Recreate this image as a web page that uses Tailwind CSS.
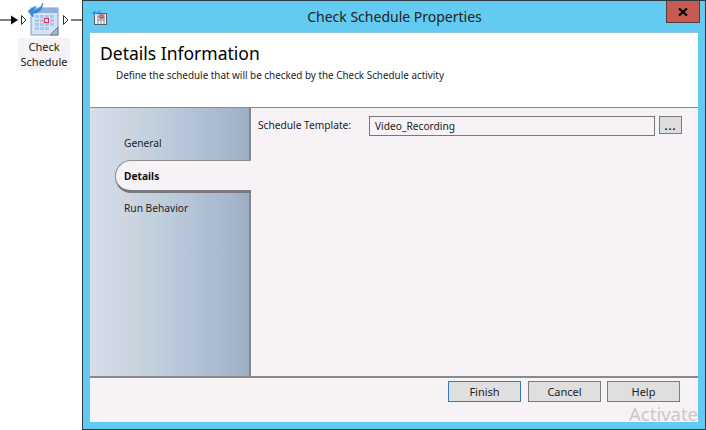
<!DOCTYPE html>
<html lang="en">
<head>
  <meta charset="UTF-8" />
  <title>Check Schedule Properties</title>
  <script src="https://cdn.jsdelivr.net/npm/@tailwindcss/browser@4"></script>
</head>
<body class="bg-white w-[706px] h-[430px] overflow-hidden relative font-['Noto_Sans',sans-serif] text-[10.200px] text-[#111]">

  <!-- Activity on the canvas -->
  <svg class="absolute left-0 top-0" width="82" height="40" viewBox="0 0 82 40">
    <path d="M0 20H11" stroke="#000" stroke-width="1" />
    <path d="M11 15.500L18 20L11 24.500Z" fill="#000" />
    <path d="M21.500 15.500L26 20L21.500 24.500Z" fill="#fff" stroke="#333" />
    <path d="M63.500 15.500L68 20L63.500 24.500Z" fill="#fff" stroke="#333" />
    <path d="M71 20H82" stroke="#000" />
    <rect x="31" y="8" width="27" height="27" fill="#d4e4f6" stroke="#7f9cc4" />
    <rect x="31" y="8" width="27" height="5" fill="#8fb0dc" />
    <g fill="#a6c8f2">
      <rect x="35" y="15" width="4" height="3" /><rect x="40" y="15" width="4" height="3" /><rect x="45" y="15" width="4" height="3" /><rect x="50" y="15" width="4" height="3" />
      <rect x="35" y="19" width="4" height="3" /><rect x="40" y="19" width="4" height="3" /><rect x="50" y="19" width="4" height="3" />
      <rect x="35" y="23" width="4" height="3" /><rect x="40" y="23" width="4" height="3" /><rect x="45" y="23" width="4" height="3" /><rect x="50" y="23" width="4" height="3" />
      <rect x="35" y="27" width="4" height="3" /><rect x="40" y="27" width="4" height="3" /><rect x="45" y="27" width="4" height="3" />
    </g>
    <rect x="44.500" y="18.500" width="4" height="4" fill="none" stroke="#d8344c" />
    <path d="M50 35L58 27V35Z" fill="#aab4c2" stroke="#6f7f95" />
    <path d="M43 3C40 9 36 11 33 10L36 6L28 11L33 17L33 13C38 14 42 10 43 3Z" fill="#2f8fe0" stroke="#1c6fc0" stroke-width=".5" />
  </svg>
  <div class="absolute left-[18px] top-[38px] w-[52px] h-[32px] bg-[#f6f2f6] flex flex-col items-center justify-center leading-[15px] text-[11px] text-[#222]">
    <span>Check</span>
    <span>Schedule</span>
  </div>

  <!-- Dialog window -->
  <div class="absolute left-[82px] top-0 w-[624px] h-[430px] border border-[#2e3a42] bg-[#63cbf1] flex flex-col">
    <div class="h-[31px] shrink-0 relative flex items-center justify-center pl-[1px] text-[14px] text-[#222]">
      <svg class="absolute left-[9px] top-[8px]" width="16" height="16" viewBox="0 0 16 16">
        <rect x="2.500" y="4.500" width="12" height="11" fill="#eef2f6" stroke="#55606e" />
        <path d="M5 8H13M5 11H13M6 5V15M9 5V15M12 5V15" stroke="#8c98a8" />
        <rect x="8" y="6" width="3" height="3" fill="none" stroke="#e02020" />
        <path d="M9 0C7 3 5 4 3 3L4 1L0 4L3 7L3 5C6 6 8 4 9 0Z" fill="#2f8fe0" />
      </svg>
      Check Schedule Properties
      <button class="absolute right-[5px] top-0 w-[34px] h-[22px] bg-[#c75a52] border border-[#5a3a38] border-t-0 flex items-center justify-center">
        <svg width="10" height="8" viewBox="0 0 10 8"><path d="M1 0.500L9 7.500M9 0.500L1 7.500" stroke="#000" stroke-width="2.200" /></svg>
      </button>
    </div>

    <div class="mx-[7px] h-[390px] flex flex-col bg-[#f6f2f6]">
      <div class="h-[76px] shrink-0 bg-white border-b border-[#8a8a8a] pl-[10px] pt-[9px] border-t border-t-[#8fc3dd]">
        <h1 class="text-[17.500px] leading-[22px] font-normal text-black">Details Information</h1>
        <p class="ml-[16px] mt-[4px] text-[9.900px] leading-[14px] text-[#222]">Define the schedule that will be checked by the Check Schedule activity</p>
      </div>

      <div class="flex-1 flex min-h-0">
        <nav class="w-[161px] shrink-0 relative border-r-2 border-[#85858c] bg-[linear-gradient(to_right,#d9dde8_0%,#cfd9e8_14%,#d0d5e0_22%,#c6d3de_32%,#bfcfda_44%,#b9cadb_52%,#b6c5d8_62%,#adbfd3_72%,#a8b9cf_84%,#a4b3c8_92%,#9cadc5_100%)] pl-[34px] text-[#222]">
          <div class="h-[53px] flex items-end pb-[10px]">General</div>
          <div class="absolute left-[25px] top-[52px] w-[136px] h-[33px] bg-[#f6f2f6] border border-r-0 border-[#8d8d90] border-b-[3px] border-b-[#77777c] rounded-l-[16px] pl-[8px] pt-[2px] flex items-center font-bold text-[#111]">Details</div>
          <div class="mt-[33px] h-[30px] flex items-center">Run Behavior</div>
        </nav>
        <div class="flex-1 flex items-start pl-[7px] pt-[9px] text-[#222]">
          <label class="w-[111px] leading-[17px]">Schedule Template:</label>
          <div class="w-[286px] h-[20px] -mt-px border border-[#7c7878] flex items-center pl-[5px] pt-[2px]">Video_Recording</div>
          <button class="ml-[4px] -mt-px w-[23px] h-[18px] bg-[#dddddd] border border-[#7c7c7c] leading-[14px] pt-[2px] text-[11px] font-semibold tracking-[1px] text-black">...</button>
        </div>
      </div>

      <div class="h-[46px] shrink-0 border-t-2 border-[#8a8a8a] flex justify-end pr-[18px] pt-[3px] text-[11px] text-[#222] relative">
        <button class="w-[73px] h-[21px] pt-[1px] bg-[#dfdfdf] border border-[#2f7fc0]">Finish</button>
        <button class="ml-[7px] w-[73px] h-[21px] pt-[1px] bg-[#dfdfdf] border border-[#7c7c7c]">Cancel</button>
        <button class="ml-[6px] w-[73px] h-[21px] pt-[1px] bg-[#dfdfdf] border border-[#7c7c7c]">Help</button>
        <span class="absolute right-0 bottom-[-4px] w-[69px] overflow-hidden whitespace-nowrap text-[18.500px] leading-[24px] text-[#c9c9cb]">Activate</span>
      </div>
    </div>
  </div>
</body>
</html>
